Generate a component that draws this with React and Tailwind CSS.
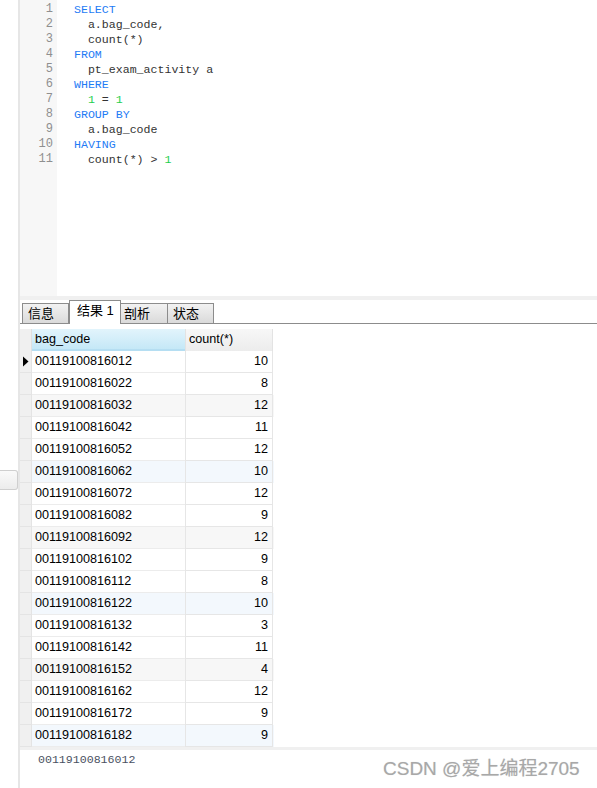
import React from "react";

const rows = [
  ["00119100816012", 10],
  ["00119100816022", 8],
  ["00119100816032", 12],
  ["00119100816042", 11],
  ["00119100816052", 12],
  ["00119100816062", 10],
  ["00119100816072", 12],
  ["00119100816082", 9],
  ["00119100816092", 12],
  ["00119100816102", 9],
  ["00119100816112", 8],
  ["00119100816122", 10],
  ["00119100816132", 3],
  ["00119100816142", 11],
  ["00119100816152", 4],
  ["00119100816162", 12],
  ["00119100816172", 9],
  ["00119100816182", 9],
];

const K = ({ children }) => <span className="text-[#1f7cf5]">{children}</span>;
const N = ({ children }) => <span className="text-[#1fcf4f]">{children}</span>;

const codeLines = [
  <K>SELECT</K>,
  <>  a.bag_code,</>,
  <>  count(*)</>,
  <K>FROM</K>,
  <>  pt_exam_activity a</>,
  <K>WHERE</K>,
  <>  <N>1</N> = <N>1</N></>,
  <K>GROUP BY</K>,
  <>  a.bag_code</>,
  <K>HAVING</K>,
  <>  count(*) &gt; <N>1</N></>,
];

function rowBg(i) {
  const n = i + 1;
  if (n % 6 === 3) return "bg-[#f7f7f7]";
  if (n % 6 === 0) return "bg-[#f3f8fd]";
  return "bg-white";
}

export default function App() {
  const sans = { fontFamily: '"Liberation Sans", "Noto Sans CJK SC", sans-serif' };
  const mono = { fontFamily: '"Liberation Mono", "DejaVu Sans Mono", monospace' };
  return (
    <div className="relative w-[597px] h-[788px] bg-white flex overflow-hidden" style={sans}>
      {/* left splitter strip */}
      <div className="w-[18px] flex flex-col">
        <div className="mt-[470px] h-[20px] w-[18px] rounded-r-[3px] border border-l-0 border-[#cfcfcf] bg-gradient-to-b from-[#fafafa] to-[#ececec]" />
      </div>
      <div className="w-[2px] bg-[#e6e6e6]" />
      <div className="flex-1 flex flex-col">
        {/* editor */}
        <div className="h-[296px] flex">
          <div className="w-[37px] bg-[#f7f7f7] pt-[2px] pr-[4px] text-right text-[#8f8f8f] text-[12px] leading-[15px]" style={mono}>
            {codeLines.map((_, i) => (
              <div key={i}>{i + 1}</div>
            ))}
          </div>
          <div className="flex-1 pt-[2px] pl-[17px] text-[#333] text-[11.6px] leading-[15px] whitespace-pre" style={mono}>
            {codeLines.map((l, i) => (
              <div key={i}>{l}</div>
            ))}
          </div>
        </div>
        <div className="h-[4px] bg-[#f0f0f0]" />
        {/* tabs */}
        <div className="h-[24px] flex items-end pl-[2px] border-b border-[#8c8c8c] text-[13px] text-black">
          <div className="h-[20px] w-[47px] border border-b-0 border-[#8c8c8c] bg-gradient-to-b from-[#f2f2f2] to-[#dadada] pl-[5px] leading-[19px]">信息</div>
          <div className="h-[24px] w-[52px] -mb-px border border-b-0 border-[#8c8c8c] bg-white pl-[7px] leading-[20px] relative z-10">结果 1</div>
          <div className="h-[20px] w-[47px] border border-b-0 border-l-0 border-[#8c8c8c] bg-gradient-to-b from-[#f2f2f2] to-[#dadada] pl-[3px] leading-[19px]">剖析</div>
          <div className="h-[20px] w-[46px] border border-b-0 border-l-0 border-[#8c8c8c] bg-gradient-to-b from-[#f2f2f2] to-[#dadada] pl-[5px] leading-[19px]">状态</div>
        </div>
        <div className="h-[5px]" />
        {/* grid */}
        <div className="w-[254px] text-[12.6px] text-black">
          <div className="flex h-[22px]">
            <div className="w-[12px] bg-[#f0f0f0] border-r border-[#e0e0e0]" />
            <div className="w-[153px] bg-gradient-to-b from-[#e2f4fc] to-[#c5e8f7] border-b-2 border-[#b5def2] pl-[3px] leading-[21px]">bag_code</div>
            <div className="w-[88px] bg-gradient-to-b from-[#f7f7f7] to-[#ececec] border-l border-r border-[#e3e3e3] pl-[3px] leading-[21px]">count(*)</div>
          </div>
          {rows.map((r, i) => (
            <div key={i} className={`flex h-[22px] ${rowBg(i)}`}>
              <div className="w-[12px] bg-[#f0f0f0] border-r border-b border-[#e4e4e4] flex items-center justify-center">
                {i === 0 && (
                  <svg width="7" height="11" viewBox="0 0 7 11">
                    <path d="M1 0.5 L6.5 5.5 L1 10.5 Z" fill="#000" />
                  </svg>
                )}
              </div>
              <div className="w-[153px] border-b border-[#ececec] pl-[3px] leading-[21px]">{r[0]}</div>
              <div className="w-[88px] border-b border-l border-r border-[#e6e6e6] pr-[4px] text-right leading-[21px]">{r[1]}</div>
            </div>
          ))}
        </div>
        <div className="h-[3px] bg-[#f0f0f0]" />
        <div className="flex-1 pl-[18px] pt-[1px] text-[11.6px] text-[#4a5162]" style={mono}>
          00119100816012
        </div>
      </div>
      {/* watermark */}
      <div className="absolute left-[383px] top-[757px] text-[19px] text-[#a8a8a8] leading-[24px] whitespace-nowrap" style={{ fontFamily: '"Liberation Sans", "Noto Sans CJK SC", sans-serif', textShadow: "0 0 1px #d8d8d8" }}>
        CSDN @爱上编程2705
      </div>
    </div>
  );
}
